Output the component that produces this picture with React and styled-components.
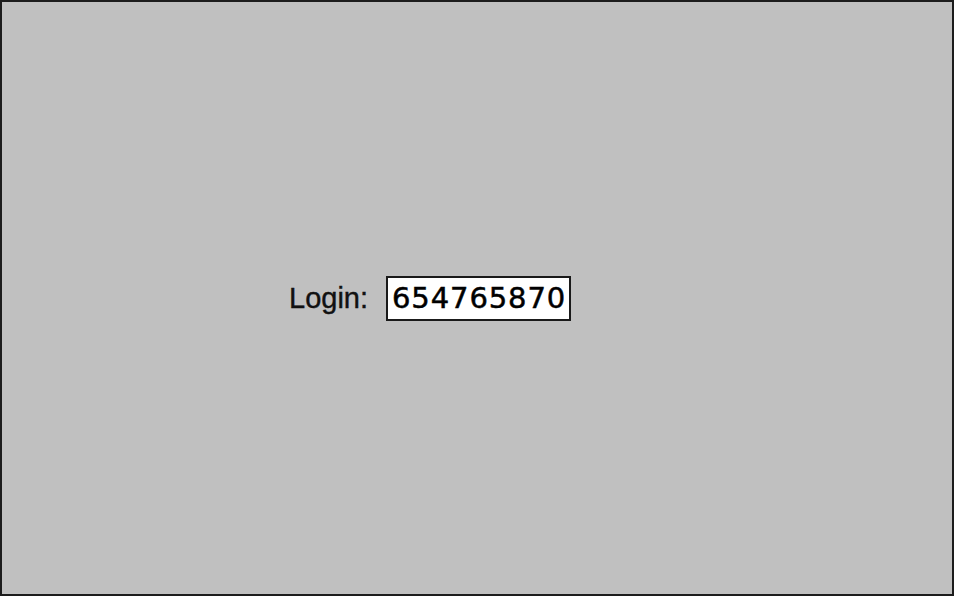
import React from "react";
import styled, { createGlobalStyle } from "styled-components";

const Global = createGlobalStyle`
  html, body { margin: 0; padding: 0; background: #ffffff; }
  body { width: 955px; height: 597px; overflow: hidden; }
`;

const Screen = styled.div`
  box-sizing: border-box;
  width: 954px;
  height: 596px;
  background: #c0c0c0;
  border: 2px solid #1c1c1c;
  display: flex;
  align-items: center;
  padding-left: 287px;
`;

const Row = styled.div`
  display: flex;
  align-items: center;
  gap: 18px;
`;

const Label = styled.span`
  font-family: "Liberation Sans", Arial, sans-serif;
  font-size: 29px;
  color: #111;
  line-height: 1;
  -webkit-text-stroke: 0.4px #111;
`;

const Field = styled.div`
  box-sizing: border-box;
  width: 185px;
  height: 45px;
  background: #ffffff;
  border: 2px solid #1a1a1a;
  display: flex;
  align-items: center;
  padding-left: 4px;
  font-family: "DejaVu Sans", sans-serif;
  font-size: 29px;
  letter-spacing: 0.9px;
  color: #000;
  -webkit-text-stroke: 0.5px #000;
`;

export default function App() {
  return (
    <>
      <Global />
      <Screen>
        <Row>
          <Label>Login:</Label>
          <Field>654765870</Field>
        </Row>
      </Screen>
    </>
  );
}
